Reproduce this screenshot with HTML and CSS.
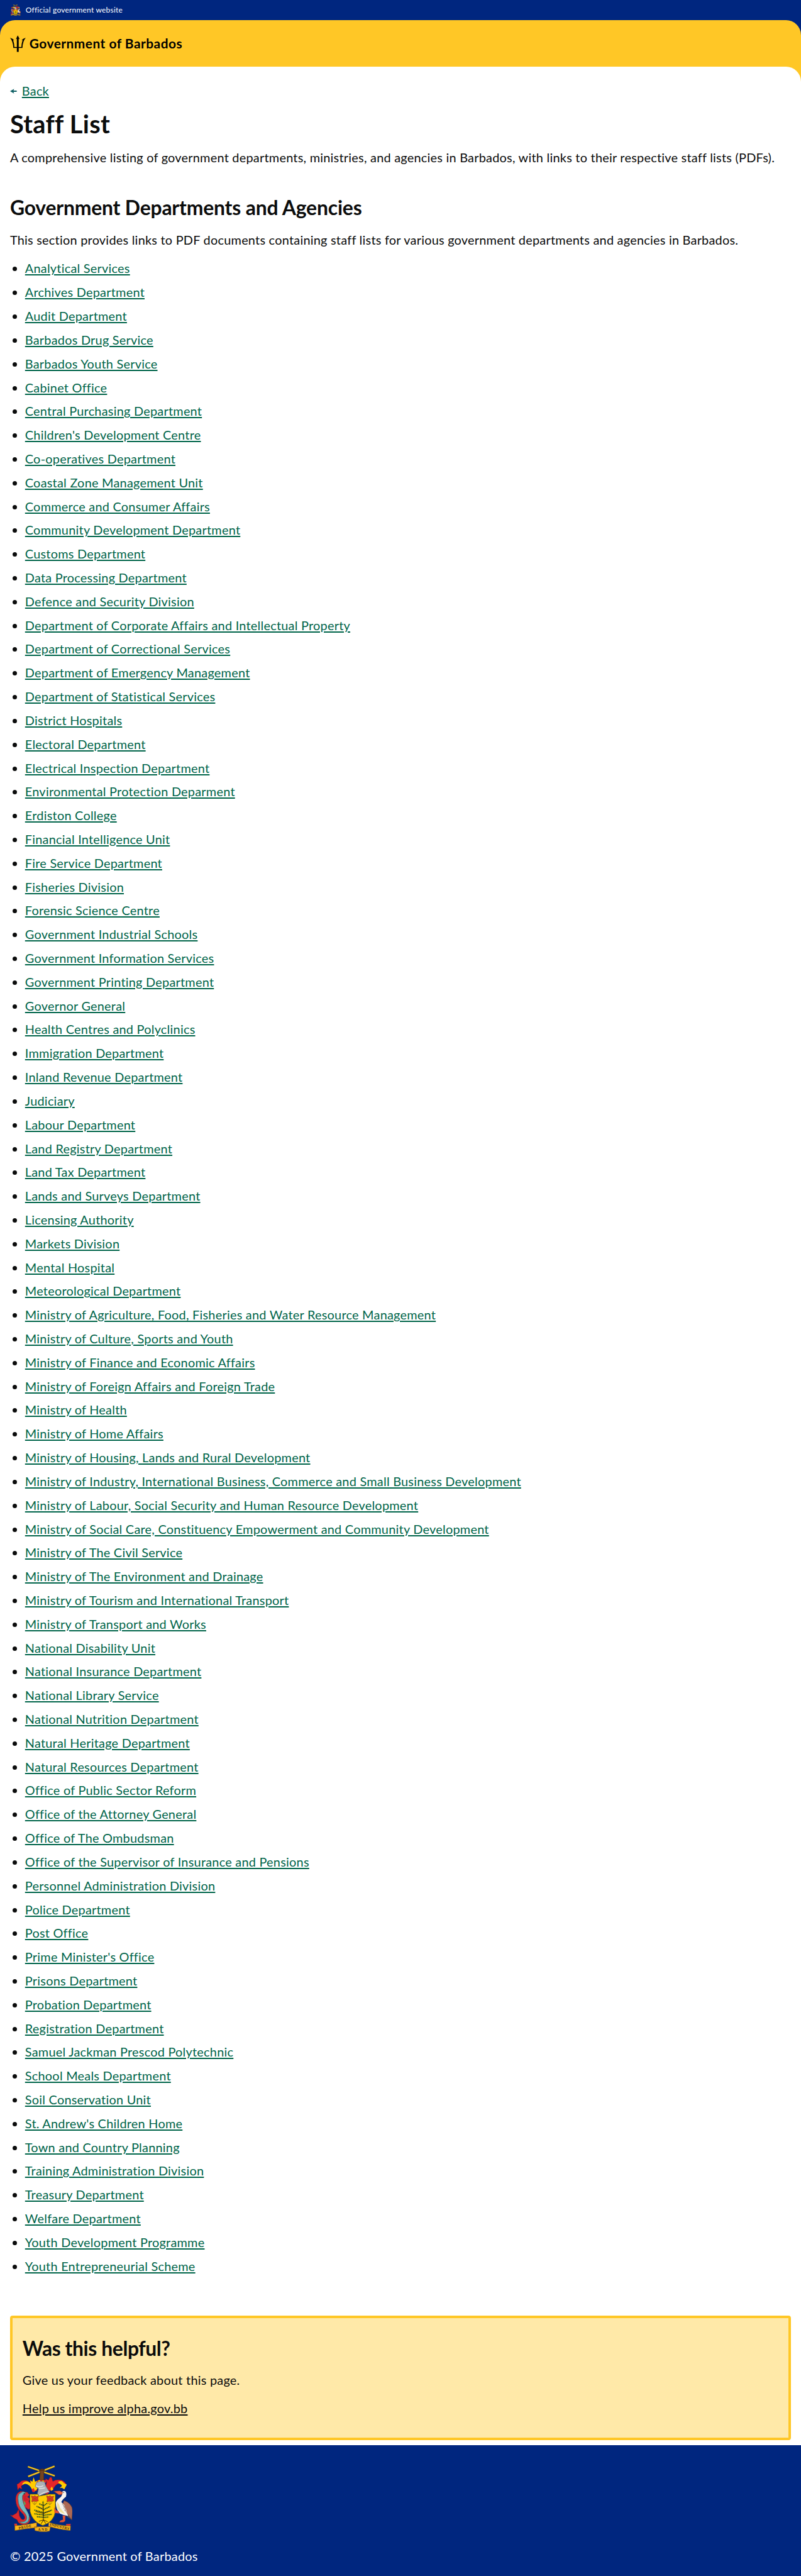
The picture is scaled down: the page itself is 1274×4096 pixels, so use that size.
FILE: index.html
```html
<!DOCTYPE html>
<html lang="en">
<head>
<meta charset="utf-8">
<title>Staff List - Government of Barbados</title>
<link rel="stylesheet" href="styles.css">
</head>
<body>
<div class="official">
  <svg class="official-crest" viewBox="0 0 300 320" aria-hidden="true"><use href="#crest"/></svg>
  <span class="official-text">Official government website</span>
</div>
<header class="masthead-wrap">
  <div class="masthead">
    <svg class="trident" viewBox="0 0 76 80" aria-hidden="true"><path d="M37.500 0 47 19 42 16V56H55Q55 43 61 23L56 23Q62 15 76 11 70 19 66 29 61 43 60 61H42V80H33V61H16Q15 43 10 29 6 19 0 11 14 15 20 23L15 23Q21 43 21 56H33V16L28 19Z"/></svg>
    <span class="brand">Government of Barbados</span>
  </div>
</header>
<div class="main-wrap">
<main class="main">
  <div class="back">
    <svg class="arrow" viewBox="0 0 32 22" aria-hidden="true"><path d="M0 11 19 0 16 8H31V14H16L19 22Z"/></svg>
    <a href="#">Back</a>
  </div>
  <h1>Staff List</h1>
  <p class="lead">A comprehensive listing of government departments, ministries, and agencies in Barbados, with links to their respective staff lists (PDFs).</p>
  <h2>Government Departments and Agencies</h2>
  <p class="intro">This section provides links to PDF documents containing staff lists for various government departments and agencies in Barbados.</p>
  <ul class="departments">
    <li><a href="#">Analytical Services</a></li>
    <li><a href="#">Archives Department</a></li>
    <li><a href="#">Audit Department</a></li>
    <li><a href="#">Barbados Drug Service</a></li>
    <li><a href="#">Barbados Youth Service</a></li>
    <li><a href="#">Cabinet Office</a></li>
    <li><a href="#">Central Purchasing Department</a></li>
    <li><a href="#">Children's Development Centre</a></li>
    <li><a href="#">Co-operatives Department</a></li>
    <li><a href="#">Coastal Zone Management Unit</a></li>
    <li><a href="#">Commerce and Consumer Affairs</a></li>
    <li><a href="#">Community Development Department</a></li>
    <li><a href="#">Customs Department</a></li>
    <li><a href="#">Data Processing Department</a></li>
    <li><a href="#">Defence and Security Division</a></li>
    <li><a href="#">Department of Corporate Affairs and Intellectual Property</a></li>
    <li><a href="#">Department of Correctional Services</a></li>
    <li><a href="#">Department of Emergency Management</a></li>
    <li><a href="#">Department of Statistical Services</a></li>
    <li><a href="#">District Hospitals</a></li>
    <li><a href="#">Electoral Department</a></li>
    <li><a href="#">Electrical Inspection Department</a></li>
    <li><a href="#">Environmental Protection Deparment</a></li>
    <li><a href="#">Erdiston College</a></li>
    <li><a href="#">Financial Intelligence Unit</a></li>
    <li><a href="#">Fire Service Department</a></li>
    <li><a href="#">Fisheries Division</a></li>
    <li><a href="#">Forensic Science Centre</a></li>
    <li><a href="#">Government Industrial Schools</a></li>
    <li><a href="#">Government Information Services</a></li>
    <li><a href="#">Government Printing Department</a></li>
    <li><a href="#">Governor General</a></li>
    <li><a href="#">Health Centres and Polyclinics</a></li>
    <li><a href="#">Immigration Department</a></li>
    <li><a href="#">Inland Revenue Department</a></li>
    <li><a href="#">Judiciary</a></li>
    <li><a href="#">Labour Department</a></li>
    <li><a href="#">Land Registry Department</a></li>
    <li><a href="#">Land Tax Department</a></li>
    <li><a href="#">Lands and Surveys Department</a></li>
    <li><a href="#">Licensing Authority</a></li>
    <li><a href="#">Markets Division</a></li>
    <li><a href="#">Mental Hospital</a></li>
    <li><a href="#">Meteorological Department</a></li>
    <li><a href="#">Ministry of Agriculture, Food, Fisheries and Water Resource Management</a></li>
    <li><a href="#">Ministry of Culture, Sports and Youth</a></li>
    <li><a href="#">Ministry of Finance and Economic Affairs</a></li>
    <li><a href="#">Ministry of Foreign Affairs and Foreign Trade</a></li>
    <li><a href="#">Ministry of Health</a></li>
    <li><a href="#">Ministry of Home Affairs</a></li>
    <li><a href="#">Ministry of Housing, Lands and Rural Development</a></li>
    <li><a href="#">Ministry of Industry, International Business, Commerce and Small Business Development</a></li>
    <li><a href="#">Ministry of Labour, Social Security and Human Resource Development</a></li>
    <li><a href="#">Ministry of Social Care, Constituency Empowerment and Community Development</a></li>
    <li><a href="#">Ministry of The Civil Service</a></li>
    <li><a href="#">Ministry of The Environment and Drainage</a></li>
    <li><a href="#">Ministry of Tourism and International Transport</a></li>
    <li><a href="#">Ministry of Transport and Works</a></li>
    <li><a href="#">National Disability Unit</a></li>
    <li><a href="#">National Insurance Department</a></li>
    <li><a href="#">National Library Service</a></li>
    <li><a href="#">National Nutrition Department</a></li>
    <li><a href="#">Natural Heritage Department</a></li>
    <li><a href="#">Natural Resources Department</a></li>
    <li><a href="#">Office of Public Sector Reform</a></li>
    <li><a href="#">Office of the Attorney General</a></li>
    <li><a href="#">Office of The Ombudsman</a></li>
    <li><a href="#">Office of the Supervisor of Insurance and Pensions</a></li>
    <li><a href="#">Personnel Administration Division</a></li>
    <li><a href="#">Police Department</a></li>
    <li><a href="#">Post Office</a></li>
    <li><a href="#">Prime Minister's Office</a></li>
    <li><a href="#">Prisons Department</a></li>
    <li><a href="#">Probation Department</a></li>
    <li><a href="#">Registration Department</a></li>
    <li><a href="#">Samuel Jackman Prescod Polytechnic</a></li>
    <li><a href="#">School Meals Department</a></li>
    <li><a href="#">Soil Conservation Unit</a></li>
    <li><a href="#">St. Andrew's Children Home</a></li>
    <li><a href="#">Town and Country Planning</a></li>
    <li><a href="#">Training Administration Division</a></li>
    <li><a href="#">Treasury Department</a></li>
    <li><a href="#">Welfare Department</a></li>
    <li><a href="#">Youth Development Programme</a></li>
    <li><a href="#">Youth Entrepreneurial Scheme</a></li>
  </ul>
  <section class="feedback">
    <h2>Was this helpful?</h2>
    <p>Give us your feedback about this page.</p>
    <p><a href="#">Help us improve alpha.gov.bb</a></p>
  </section>
</main>
</div>
<footer class="footer">
  <svg class="footer-crest" viewBox="0 0 300 320" role="img" aria-label="Coat of arms of Barbados">
    <g id="crest">
    <!-- crossed sugar canes and arm -->
    <g stroke="#6b5312" stroke-width="9"><path d="M85 6 215 50M214 4 86 53"/></g>
    <g stroke="#f5c626" stroke-width="6"><path d="M86 6 214 50M213 4 87 53"/></g>
    <path d="M141 70 144 38 139 22Q151 12 165 19L162 38 162 72Z" fill="#75451f" stroke="#3c2415" stroke-width="2"/>
    <path d="M141 24h23M146 18v9M152 16v10M158 17v9" stroke="#3c2415" stroke-width="1.5"/>
    <!-- mantling -->
    <path d="M130 122C102 125 105 93 82 87 73 84 61 92 53 101L58 114 44 107 37 119 33 91 44 85C55 67 83 69 96 83L99 72 108 81 112 65 122 82 132 74 126 102Z" fill="#e52529" stroke="#711719" stroke-width="1.5"/>
    <path d="M59 87C75 69 91 76 101 88L96 72 107 78 113 57 120 78 132 73 125 95 132 112 119 123 105 115C97 97 77 79 59 94Z" fill="#fc0"/>
    <path d="M103 115 114 109 120 127 108 128Z" fill="#e52529"/>
    <path d="M168 113 176 79 169 63 184 71 191 57 199 57 205 76C234 60 263 72 269 91L259 99 244 91C226 79 211 103 205 119L184 121Z" fill="#e52529" stroke="#711719" stroke-width="1.5"/>
    <path d="M232 78C247 71 254 78 257 84L272 92 260 115 249 107 238 109 249 98C243 90 238 87 232 85Z" fill="#fc0"/>
    <path d="M194 110 201 101 207 116 196 122Z" fill="#fc0"/>
    <!-- helm -->
    <path d="M132 71 175 70 173 83 128 81Z" fill="#e52529"/>
    <circle cx="140" cy="76" r="6" fill="#fc0"/><circle cx="158" cy="77" r="5" fill="#fc0"/>
    <path d="M126 82Q147 72 166 80L171 98Q180 114 190 128L163 137 139 147 131 136 137 111 121 101Z" fill="#adb1b7" stroke="#656970" stroke-width="2"/>
    <path d="M124 98Q141 108 159 97M137 112 167 108M139 144Q163 125 187 126" fill="none" stroke="#e1e4e5" stroke-width="4"/>
    <path d="M165 136 188 127 181 138Z" fill="#c1242c"/>
    <!-- dolphin -->
    <path d="M36 133 51 124 83 129 93 142 83 151 95 160 90 172 102 204 87 211 75 201Q81 230 97 253 98 280 67 285 39 282 34 261L18 252 1 238 12 240 32 228 41 208 45 241Q55 267 68 258 76 246 58 229 34 206 30 184 22 153 36 133Z" fill="#dd282e" stroke="#791c26" stroke-width="2"/>
    <path d="M43 137 62 125 76 131 61 142Q55 153 63 178 71 205 84 224 98 247 86 270 62 287 46 269 70 276 79 259 85 243 65 222 38 196 39 165 36 149 43 137Z" fill="#69b6bc" stroke="#296e79" stroke-width="2"/>
    <path d="M49 140Q43 177 67 211T82 266M57 137Q50 170 72 206T87 246M43 157Q43 190 68 222" fill="none" stroke="#b8d6c9" stroke-width="3" stroke-dasharray="3 4"/>
    <path d="M61 141 83 145 76 154 91 165 67 171Z" fill="#c8202e"/>
    <path d="M64 165 76 184 69 192Z" fill="#56ae59"/>
    <circle cx="68" cy="136" r="3" fill="#241c1c"/>
    <!-- shield -->
    <path d="M95 138 134 138 139 147 187 138 217 138 217 222Q210 271 157 288 108 270 96 222Z" fill="#fc0" stroke="#66530e" stroke-width="2.5"/>
    <g id="flower"><path d="M102 146 112 149 119 145 126 150 136 147 133 159 136 170 124 173 116 171 104 174 106 160Z" fill="#e03a24" stroke="#86391d" stroke-width="2"/><path d="M110 155 128 166M127 154 110 166M118 172V188M108 176Q111 187 118 188 125 184 128 176" fill="none" stroke="#79591d" stroke-width="2"/></g>
    <use href="#flower" x="73"/>
    <g fill="none" stroke="#33591f" stroke-width="6" stroke-dasharray="6 2">
      <path d="M160 252 158 171M160 193 140 184M160 194 179 181M160 211 127 196M160 212 192 197M160 226 116 214M160 229 201 214M160 237 116 232M160 239 201 234M160 249 127 246M160 250 185 247"/>
    </g>
    <path d="M158 183 160 267M160 211 135 198M160 230 122 221M160 230 194 218M160 261 138 268M160 261 149 280M160 261 171 279M160 261 180 270" fill="none" stroke="#49330f" stroke-width="3"/>
    <!-- pelican -->
    <path d="M259 168Q299 182 300 219L296 262 266 234 244 207Z" fill="#ad6955" stroke="#55302b" stroke-width="2"/>
    <path d="M242 196Q272 226 298 262L277 249 246 222Z" fill="#55484e"/>
    <path d="M248 128Q255 120 265 124 273 134 268 150 249 164 246 176L260 190Q274 226 279 242 256 240 239 231 221 213 219 178 223 166 244 151L250 139Z" fill="#f8f4ef"/>
    <path d="M225 174Q235 182 240 203L263 232Q239 229 226 204Z" fill="#efe09c"/>
    <path d="M249 185Q265 193 258 207M255 194Q271 202 262 218M263 211 281 242" fill="none" stroke="#6e5149" stroke-width="2"/>
    <path d="M209 124 239 122 252 129 248 139 235 141Z" fill="#ee673e" stroke="#8e3423" stroke-width="2"/>
    <circle cx="257" cy="130" r="2" fill="#111"/>
    <path d="M235 230 213 228 211 201 222 216 233 218ZM252 240 265 241 264 267 255 272 236 272 242 264 254 260Z" fill="#e05032"/>
    <!-- motto ribbon -->
    <path d="M20 279 33 279 36 302 25 310ZM268 281 291 280 287 299 272 300Z" fill="#dc342d"/>
    <path d="M23 289Q73 287 128 274L127 298Q73 303 23 312ZM117 294H194L189 315Q153 322 119 312ZM185 272Q231 289 290 290L289 312Q235 308 184 292Z" fill="#f9b51c" stroke="#795514" stroke-width="2"/>
    <g class="motto"><text transform="translate(42 306) rotate(-10)" textLength="62">PRIDE</text><text x="134" y="313" textLength="45">AND</text><text transform="translate(190 288) rotate(13)" textLength="96">INDUSTRY</text></g>
    </g>
  </svg>
  <p>© 2025 Government of Barbados</p>
</footer>
</body>
</html>
```
FILE: styles.css
```css
* { box-sizing: border-box; }
html { background: #00267f; }
body {
  margin: 0;
  zoom: 0.9952;
  font: 400 20px/30px Lato, "Open Sans", sans-serif;
  letter-spacing: 0.24px;
  color: #0b0c0c;
}
h1, h2, p, ul { margin: 0; padding: 0; }
.motto { font: 700 17px "Liberation Serif", serif; letter-spacing: 0; fill: #3a2a12; }

.official {
  display: flex;
  align-items: center;
  gap: 8px;
  height: 32px;
  padding: 0 16px;
  background: #00267f;
  color: #fff;
  font-size: 12px;
  line-height: 16px;
}
.official-crest { width: 17px; height: 18px; }

.masthead-wrap { background: #00267f; }
.masthead {
  display: flex;
  align-items: center;
  gap: 6px;
  height: 75px;
  padding: 0 16px;
  border-radius: 24px 24px 0 0;
  background: #ffc726;
  color: #000;
}
.trident { width: 25px; height: 27px; }
.brand { font-size: 21px; font-weight: 700; line-height: 30px; letter-spacing: 0.5px; }

.main-wrap { background: #ffc726; }
.main {
  padding: 23.5px 16px 8px;
  border-radius: 24px 24px 0 0;
  background: #fff;
}
a { color: #00654a; text-decoration: underline; text-decoration-thickness: 2.02px; text-underline-offset: 2px; }
.back { display: flex; align-items: center; gap: 8px; height: 30px; }
.arrow { width: 11px; height: 8px; fill: #0e5f64; }
h1 { margin-top: 13px; font-size: 40px; line-height: 48px; font-weight: 700; letter-spacing: 0.3px; }
h2 { font-size: 32px; line-height: 40px; font-weight: 700; letter-spacing: -0.17px; }
.lead { margin-top: 16px; }
.main > h2 { margin-top: 45px; }
.intro { margin-top: 16px; }
.departments {
  display: flex;
  flex-direction: column;
  gap: 8px;
  margin: 16px 0 63.5px;
  padding-left: 24px;
  list-style: disc;
}

.feedback {
  height: 199px;
  padding: 29.5px 16px 0;
  border: 4.02px solid #ffc726;
  border-radius: 4px;
  background: #ffe9a8;
}
.feedback h2 { letter-spacing: -0.4px; }
.feedback p { margin-top: 15px; }
.feedback a { color: #0b0c0c; }

.footer { height: 209px; padding: 32px 16px 0; background: #00267f; color: #fff; }
.footer-crest { display: block; width: 100px; height: 107px; }
.footer p { margin-top: 24.5px; }
```
